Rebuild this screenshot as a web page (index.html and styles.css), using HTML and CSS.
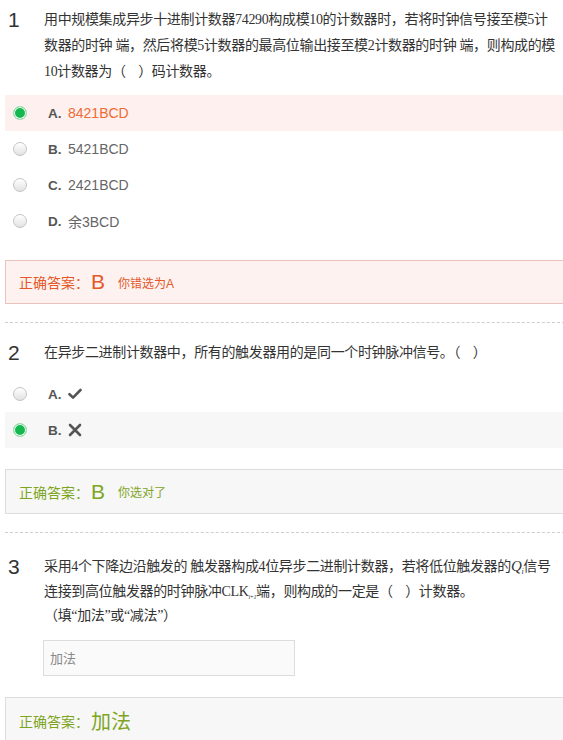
FILE: index.html
```html
<!DOCTYPE html>
<html lang="zh">
<head>
<meta charset="utf-8">
<title>计数器测验</title>
<link rel="stylesheet" href="styles.css">
</head>
<body>
<div class="page">
  <section class="question q1">
    <div class="q-head">
      <div class="num">1</div>
      <div class="q-text">用中规模集成异步十进制计数器74290构成模10的计数器时，若将时钟信号接至模5计<br>数器的时钟 端，然后将模5计数器的最高位输出接至模2计数器的时钟 端，则构成的模<br>10计数器为（&nbsp;&nbsp;&nbsp;&nbsp;）码计数器。</div>
    </div>
    <ul class="options">
      <li class="opt chosen-wrong"><span class="radio on"></span><span class="label">A.</span><span class="val">8421BCD</span></li>
      <li class="opt"><span class="radio"></span><span class="label">B.</span><span class="val">5421BCD</span></li>
      <li class="opt"><span class="radio"></span><span class="label">C.</span><span class="val">2421BCD</span></li>
      <li class="opt"><span class="radio"></span><span class="label">D.</span><span class="val">余3BCD</span></li>
    </ul>
    <div class="answer wrong"><span class="a-title">正确答案：</span><span class="a-key">B</span><span class="a-note">你错选为A</span></div>
  </section>

  <section class="question q2">
    <div class="q-head">
      <div class="num">2</div>
      <div class="q-text">在异步二进制计数器中，所有的触发器用的是同一个时钟脉冲信号。（&nbsp;&nbsp;&nbsp;&nbsp;）</div>
    </div>
    <ul class="options">
      <li class="opt"><span class="radio"></span><span class="label">A.</span><span class="val"><svg class="ico" width="14" height="12" viewBox="0 0 14 12"><path d="M1.5 6.2 L5 9.6 L12.5 2" fill="none" stroke="#555" stroke-width="2.6" stroke-linecap="round" stroke-linejoin="round"/></svg></span></li>
      <li class="opt chosen"><span class="radio on"></span><span class="label">B.</span><span class="val"><svg class="ico" width="14" height="14" viewBox="0 0 14 14"><path d="M2 2 L12 12 M12 2 L2 12" fill="none" stroke="#555" stroke-width="2.6" stroke-linecap="round"/></svg></span></li>
    </ul>
    <div class="answer right"><span class="a-title">正确答案：</span><span class="a-key">B</span><span class="a-note">你选对了</span></div>
  </section>

  <section class="question q3">
    <div class="q-head">
      <div class="num">3</div>
      <div class="q-text">采用4个下降边沿触发的 触发器构成4位异步二进制计数器，若将低位触发器的<i class="q">Q</i><sub class="s">i</sub>信号<br>连接到高位触发器的时钟脉冲CLK<sub class="s2">i+1</sub>端，则构成的一定是（&nbsp;&nbsp;&nbsp;&nbsp;）计数器。<br>（填“加法”或“减法”）</div>
    </div>
    <div class="fill"><div class="input">加法</div></div>
    <div class="answer right big"><span class="a-title">正确答案：</span><span class="a-key">加法</span></div>
  </section>
</div>
</body>
</html>
```

FILE: styles.css
```css
html, body {
  margin: 0;
  padding: 0;
  overflow: hidden;
  background: #ffffff;
}
.page {
  width: 580px;
  margin-left: 5px;
  font-family: "Liberation Sans", "Noto Sans CJK SC", sans-serif;
  color: #333;
}
.question {
  border-bottom: 1px dashed #cfcfcf;
  padding-bottom: 18px;
}
.q1 { padding-top: 7px; }
.q2 { padding-top: 17px; }
.q3 { padding-top: 21px; border-bottom: none; }
.q-head {
  display: flex;
  align-items: flex-start;
}
.num {
  width: 36px;
  padding-left: 3px;
  font-size: 21px;
  line-height: 26px;
  color: #333;
  flex: none;
}
.q-text {
  font-family: "Liberation Serif", "Noto Sans CJK SC", serif;
  font-size: 14px;
  letter-spacing: -0.35px;
  line-height: 26px;
  color: #333;
  white-space: nowrap;
}
.q3 .q-text { line-height: 24.5px; }
.q {
  font-style: italic;
  font-size: 15px;
}
.s {
  font-size: 8px;
  font-style: italic;
  vertical-align: -3px;
  line-height: 0;
}
.s2 {
  font-size: 6px;
  font-style: italic;
  vertical-align: -3px;
  line-height: 0;
}
.options {
  list-style: none;
  margin: 10px 0 0;
  padding: 0;
}
.opt {
  height: 36px;
  display: flex;
  align-items: center;
  padding-left: 8px;
  font-size: 14px;
  color: #666;
}
.chosen-wrong { background: #fdf0ee; }
.chosen-wrong .val { color: #f06a34; }
.chosen { background: #f7f7f7; }
.radio {
  width: 12px;
  height: 12px;
  border-radius: 50%;
  border: 1px solid #c4c4c4;
  background: linear-gradient(#ffffff, #e2e2e2);
  flex: none;
}
.radio.on {
  background: #14b84e;
  border-color: #a8dcb4;
  box-shadow: inset 0 0 0 1px #ffffff;
}
.label {
  margin-left: 21px;
  font-weight: bold;
  font-size: 13.5px;
  color: #555;
  width: 20px;
}
.val {
  display: flex;
  align-items: center;
  color: #666;
}
.ico { display: block; }
.answer {
  margin-top: 21px;
  height: 42px;
  display: flex;
  align-items: center;
  padding-left: 13px;
  border: 1px solid #dddddd;
  background: #f7f7f7;
}
.answer.wrong {
  border-color: #eac2bb;
  background: #fdf2f0;
  color: #e4582a;
}
.answer.right { color: #7ea51f; }
.q2 .answer { height: 43px; }
.answer.big { margin-top: 21px; height: 46px; }
.a-title { font-size: 14px; }
.a-key {
  font-size: 21px;
  margin-left: 2px;
  margin-right: 13px;
}
.big .a-key { font-size: 20px; margin-left: 2px; }
.a-note { font-size: 12px; }
.fill {
  margin-top: 11px;
  padding-left: 38px;
}
.input {
  width: 244px;
  height: 34px;
  border: 1px solid #dddddd;
  background: #fafafa;
  padding-left: 6px;
  display: flex;
  align-items: center;
  font-size: 13px;
  color: #888;
}
```
